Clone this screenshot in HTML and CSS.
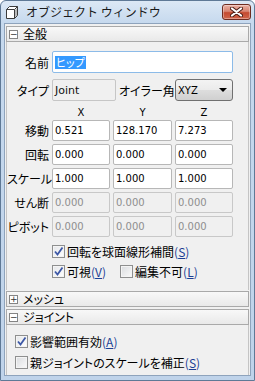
FILE: index.html
```html
<!DOCTYPE html>
<html lang="ja">
<head>
    <meta charset="UTF-8">
    <title>オブジェクト ウィンドウ</title>
    <link rel="stylesheet" href="styles.css">
</head>
<body>
    <div class="window">
        <div class="titlebar">
            <svg class="app-icon" width="12" height="13" viewBox="0 0 12 13">
                <path d="M0.5 3.5 L3.5 0.5 L11.5 0.5 L11.5 9.5 L8.5 12.5 L0.5 12.5 Z" fill="#fff" stroke="#3c3c3c"/>
                <path d="M0.5 3.5 L8.5 3.5 L11.5 0.5 M8.5 3.5 L8.5 12.5" fill="none" stroke="#3c3c3c"/>
                <path d="M9 4 L11 2 L11 9.3 L9 11.3 Z" fill="#b9b9b9"/>
            </svg>
            <span class="title">オブジェクト ウィンドウ</span>
            <div class="close-btn">
                <svg width="13" height="10" viewBox="0 0 13 10">
                    <path d="M2 1.5 L11 8.5 M11 1.5 L2 8.5" stroke="#4a1d14" stroke-width="4" stroke-linecap="round"/>
                    <path d="M2 1.5 L11 8.5 M11 1.5 L2 8.5" stroke="#fff" stroke-width="2.2" stroke-linecap="round"/>
                </svg>
            </div>
        </div>

        <div class="client">
            <div class="section-head"><span class="toggle">−</span>全般</div>
            <div class="section-body general">
                <div class="row name-row">
                    <span class="label">名前</span>
                    <div class="field focused wide"><span class="selected">ヒップ</span></div>
                </div>
                <div class="row type-row">
                    <span class="label">タイプ</span>
                    <div class="field readonly type-field">Joint</div>
                    <span class="label euler-label">オイラー角</span>
                    <div class="select">XYZ<span class="arrow"></span></div>
                </div>
                <div class="row axis-row">
                    <span class="label"></span>
                    <span class="axis c1">X</span>
                    <span class="axis c2">Y</span>
                    <span class="axis c3">Z</span>
                </div>
                <div class="row vec-row">
                    <span class="label">移動</span>
                    <div class="field c1">0.521</div>
                    <div class="field c2">128.170</div>
                    <div class="field c3">7.273</div>
                </div>
                <div class="row vec-row">
                    <span class="label">回転</span>
                    <div class="field c1">0.000</div>
                    <div class="field c2">0.000</div>
                    <div class="field c3">0.000</div>
                </div>
                <div class="row vec-row">
                    <span class="label">スケール</span>
                    <div class="field c1">1.000</div>
                    <div class="field c2">1.000</div>
                    <div class="field c3">1.000</div>
                </div>
                <div class="row vec-row">
                    <span class="label">せん断</span>
                    <div class="field disabled c1">0.000</div>
                    <div class="field disabled c2">0.000</div>
                    <div class="field disabled c3">0.000</div>
                </div>
                <div class="row vec-row">
                    <span class="label">ピボット</span>
                    <div class="field disabled c1">0.000</div>
                    <div class="field disabled c2">0.000</div>
                    <div class="field disabled c3">0.000</div>
                </div>
                <div class="row check-row first">
                    <span class="check-item">
                        <span class="cb checked"><svg width="11" height="11" viewBox="0 0 11 11"><path d="M2 5.5 L4.5 8.5 L9.5 1.5" fill="none" stroke="#3d58a6" stroke-width="1.8"/></svg></span>
                        回転を球面線形補間<span class="key">(<u>S</u>)</span>
                    </span>
                </div>
                <div class="row check-row">
                    <span class="check-item">
                        <span class="cb checked"><svg width="11" height="11" viewBox="0 0 11 11"><path d="M2 5.5 L4.5 8.5 L9.5 1.5" fill="none" stroke="#3d58a6" stroke-width="1.8"/></svg></span>
                        可視<span class="key">(<u>V</u>)</span>
                    </span>
                    <span class="check-item lock">
                        <span class="cb"></span>
                        編集不可<span class="key">(<u>L</u>)</span>
                    </span>
                </div>
            </div>

            <div class="section-head mesh"><span class="toggle">+</span>メッシュ</div>
            <div class="section-head joint-head"><span class="toggle">−</span>ジョイント</div>
            <div class="section-body joint">
                <div class="row check-row j1">
                    <span class="check-item">
                        <span class="cb checked"><svg width="11" height="11" viewBox="0 0 11 11"><path d="M2 5.5 L4.5 8.5 L9.5 1.5" fill="none" stroke="#3d58a6" stroke-width="1.8"/></svg></span>
                        影響範囲有効<span class="key">(<u>A</u>)</span>
                    </span>
                </div>
                <div class="row check-row j2">
                    <span class="check-item">
                        <span class="cb"></span>
                        親ジョイントのスケールを補正<span class="key">(<u>S</u>)</span>
                    </span>
                </div>
            </div>
        </div>
    </div>
</body>
</html>
```

FILE: styles.css
```css
html, body {
    margin: 0;
    padding: 0;
}
body {
    font-family: "Noto Sans CJK JP", sans-serif;
    font-size: 12px;
    color: #000;
    font-feature-settings: "palt";
    background: #fff;
}
.window {
    width: 255px;
    height: 381px;
    box-sizing: border-box;
    background: linear-gradient(#dce8f5, #c6d9ee 22px, #bfd3ea);
    border: 1px solid #5f7996;
    border-radius: 6px 6px 0 0;
    padding: 0 3px 4px 3px;
    display: flex;
    flex-direction: column;
}
.titlebar {
    height: 22px;
    display: flex;
    align-items: center;
    flex-shrink: 0;
}
.app-icon {
    margin-left: 2px;
    margin-top: 1px;
}
.title {
    margin-left: 8px;
    font-size: 12px;
    font-feature-settings: normal;
    color: #1a1a1a;
    line-height: 14px;
}
.close-btn {
    margin-left: auto;
    margin-right: 0;
    width: 29px;
    height: 16px;
    box-sizing: border-box;
    border: 1px solid #6e2c20;
    border-radius: 3px;
    background: linear-gradient(#eab1a4, #d88572 45%, #c44a30 55%, #d0664c);
    box-shadow: inset 0 0 0 1px rgba(255,255,255,0.35);
    display: flex;
    align-items: center;
    justify-content: center;
}
.client {
    flex: 1;
    background: #f0f0f0;
    border: 1px solid #8ea3bc;
    display: flex;
    flex-direction: column;
}
.section-head {
    height: 14px;
    margin: 2px 1px 0;
    border: 1px solid #a9a9a9;
    background: linear-gradient(#f8f8f8, #e9e9e9);
    display: flex;
    align-items: center;
    padding-left: 2px;
    line-height: 14px;
    flex-shrink: 0;
}
.toggle {
    width: 9px;
    height: 9px;
    box-sizing: border-box;
    border: 1px solid #848484;
    background: #fff;
    margin-right: 5px;
    font-family: "DejaVu Sans", sans-serif;
    font-size: 9px;
    line-height: 6px;
    text-align: center;
    color: #333;
}
.section-body {
    margin: 0 1px;
    border-left: 1px solid #c4c4c4;
    border-right: 1px solid #c4c4c4;
    display: flex;
    flex-direction: column;
}
.general {
    height: 248px;
    flex-shrink: 0;
}
.joint {
    flex: 1;
}
.section-head.mesh {
    margin-top: 1px;
}
.row {
    display: flex;
    align-items: center;
    gap: 3px;
}
.label {
    width: 42px;
    text-align: right;
    flex-shrink: 0;
    white-space: nowrap;
}
.name-row {
    margin-top: 9px;
    height: 22px;
}
.type-row {
    margin-top: 6px;
    height: 22px;
}
.axis-row {
    margin-top: 3px;
    height: 16px;
}
.vec-row {
    margin-top: 3px;
    height: 21px;
}
.axis-row + .vec-row {
    margin-top: 0;
}
.c1, .c3 {
    width: 58px;
}
.c2 {
    width: 59px;
}
.axis {
    text-align: center;
    font-family: "DejaVu Sans", sans-serif;
    font-size: 10px;
}
.field {
    box-sizing: border-box;
    height: 100%;
    border: 1px solid #b7b7b7;
    border-radius: 2px;
    background: #fff;
    padding: 0 2px;
    display: flex;
    align-items: center;
    font-family: "DejaVu Sans", sans-serif;
    font-size: 10px;
    flex-shrink: 0;
}
.field.wide {
    width: 181px;
}
.field.focused {
    border-color: #8cbbe8;
}
.selected {
    background: #3399ff;
    color: #fff;
    font-family: "Noto Sans CJK JP", sans-serif;
    font-size: 11px;
    line-height: 13px;
    padding: 0 1px;
}
.field.readonly {
    background: #f0f0f0;
    border-color: #c6c6c6;
    color: #111;
    font-size: 11px;
}
.type-field {
    width: 64px;
}
.euler-label {
    width: 53px;
}
.field.disabled {
    background: #f0f0f0;
    border-color: #c8c8c8;
    color: #8e8e8e;
}
.select {
    box-sizing: border-box;
    width: 58px;
    height: 100%;
    border: 1px solid #707070;
    border-radius: 3px;
    background: linear-gradient(#f3f3f3, #ebebeb 48%, #dddddd 52%, #d0d0d0);
    display: flex;
    align-items: center;
    padding-left: 2px;
    font-family: "DejaVu Sans", sans-serif;
    font-size: 10px;
    position: relative;
}
.arrow {
    position: absolute;
    right: 5px;
    top: 8px;
    width: 0;
    height: 0;
    border-left: 4px solid transparent;
    border-right: 4px solid transparent;
    border-top: 4px solid #000;
}
.check-row {
    height: 16px;
    padding-left: 45px;
    gap: 0;
}
.check-row.first {
    margin-top: 6px;
}
.check-row + .check-row {
    margin-top: 4px;
}
.check-item {
    display: flex;
    align-items: center;
    white-space: nowrap;
}
.check-item.lock {
    margin-left: 14px;
}
.cb {
    width: 13px;
    height: 13px;
    box-sizing: border-box;
    border: 1px solid #8e8f8f;
    background: linear-gradient(135deg, #dadcdf, #fafafa);
    box-shadow: inset 0 0 0 1px #f4f4f4;
    margin-right: 2px;
    display: flex;
    align-items: center;
    justify-content: center;
}
.cb.checked {
    background: linear-gradient(135deg, #e4e6e9, #ffffff);
}
.key {
    color: #1c3f94;
}
.joint .check-row {
    padding-left: 8px;
}
.check-row.j1 {
    margin-top: 8px;
}
.check-row.j2 {
    margin-top: 5px;
}
```
